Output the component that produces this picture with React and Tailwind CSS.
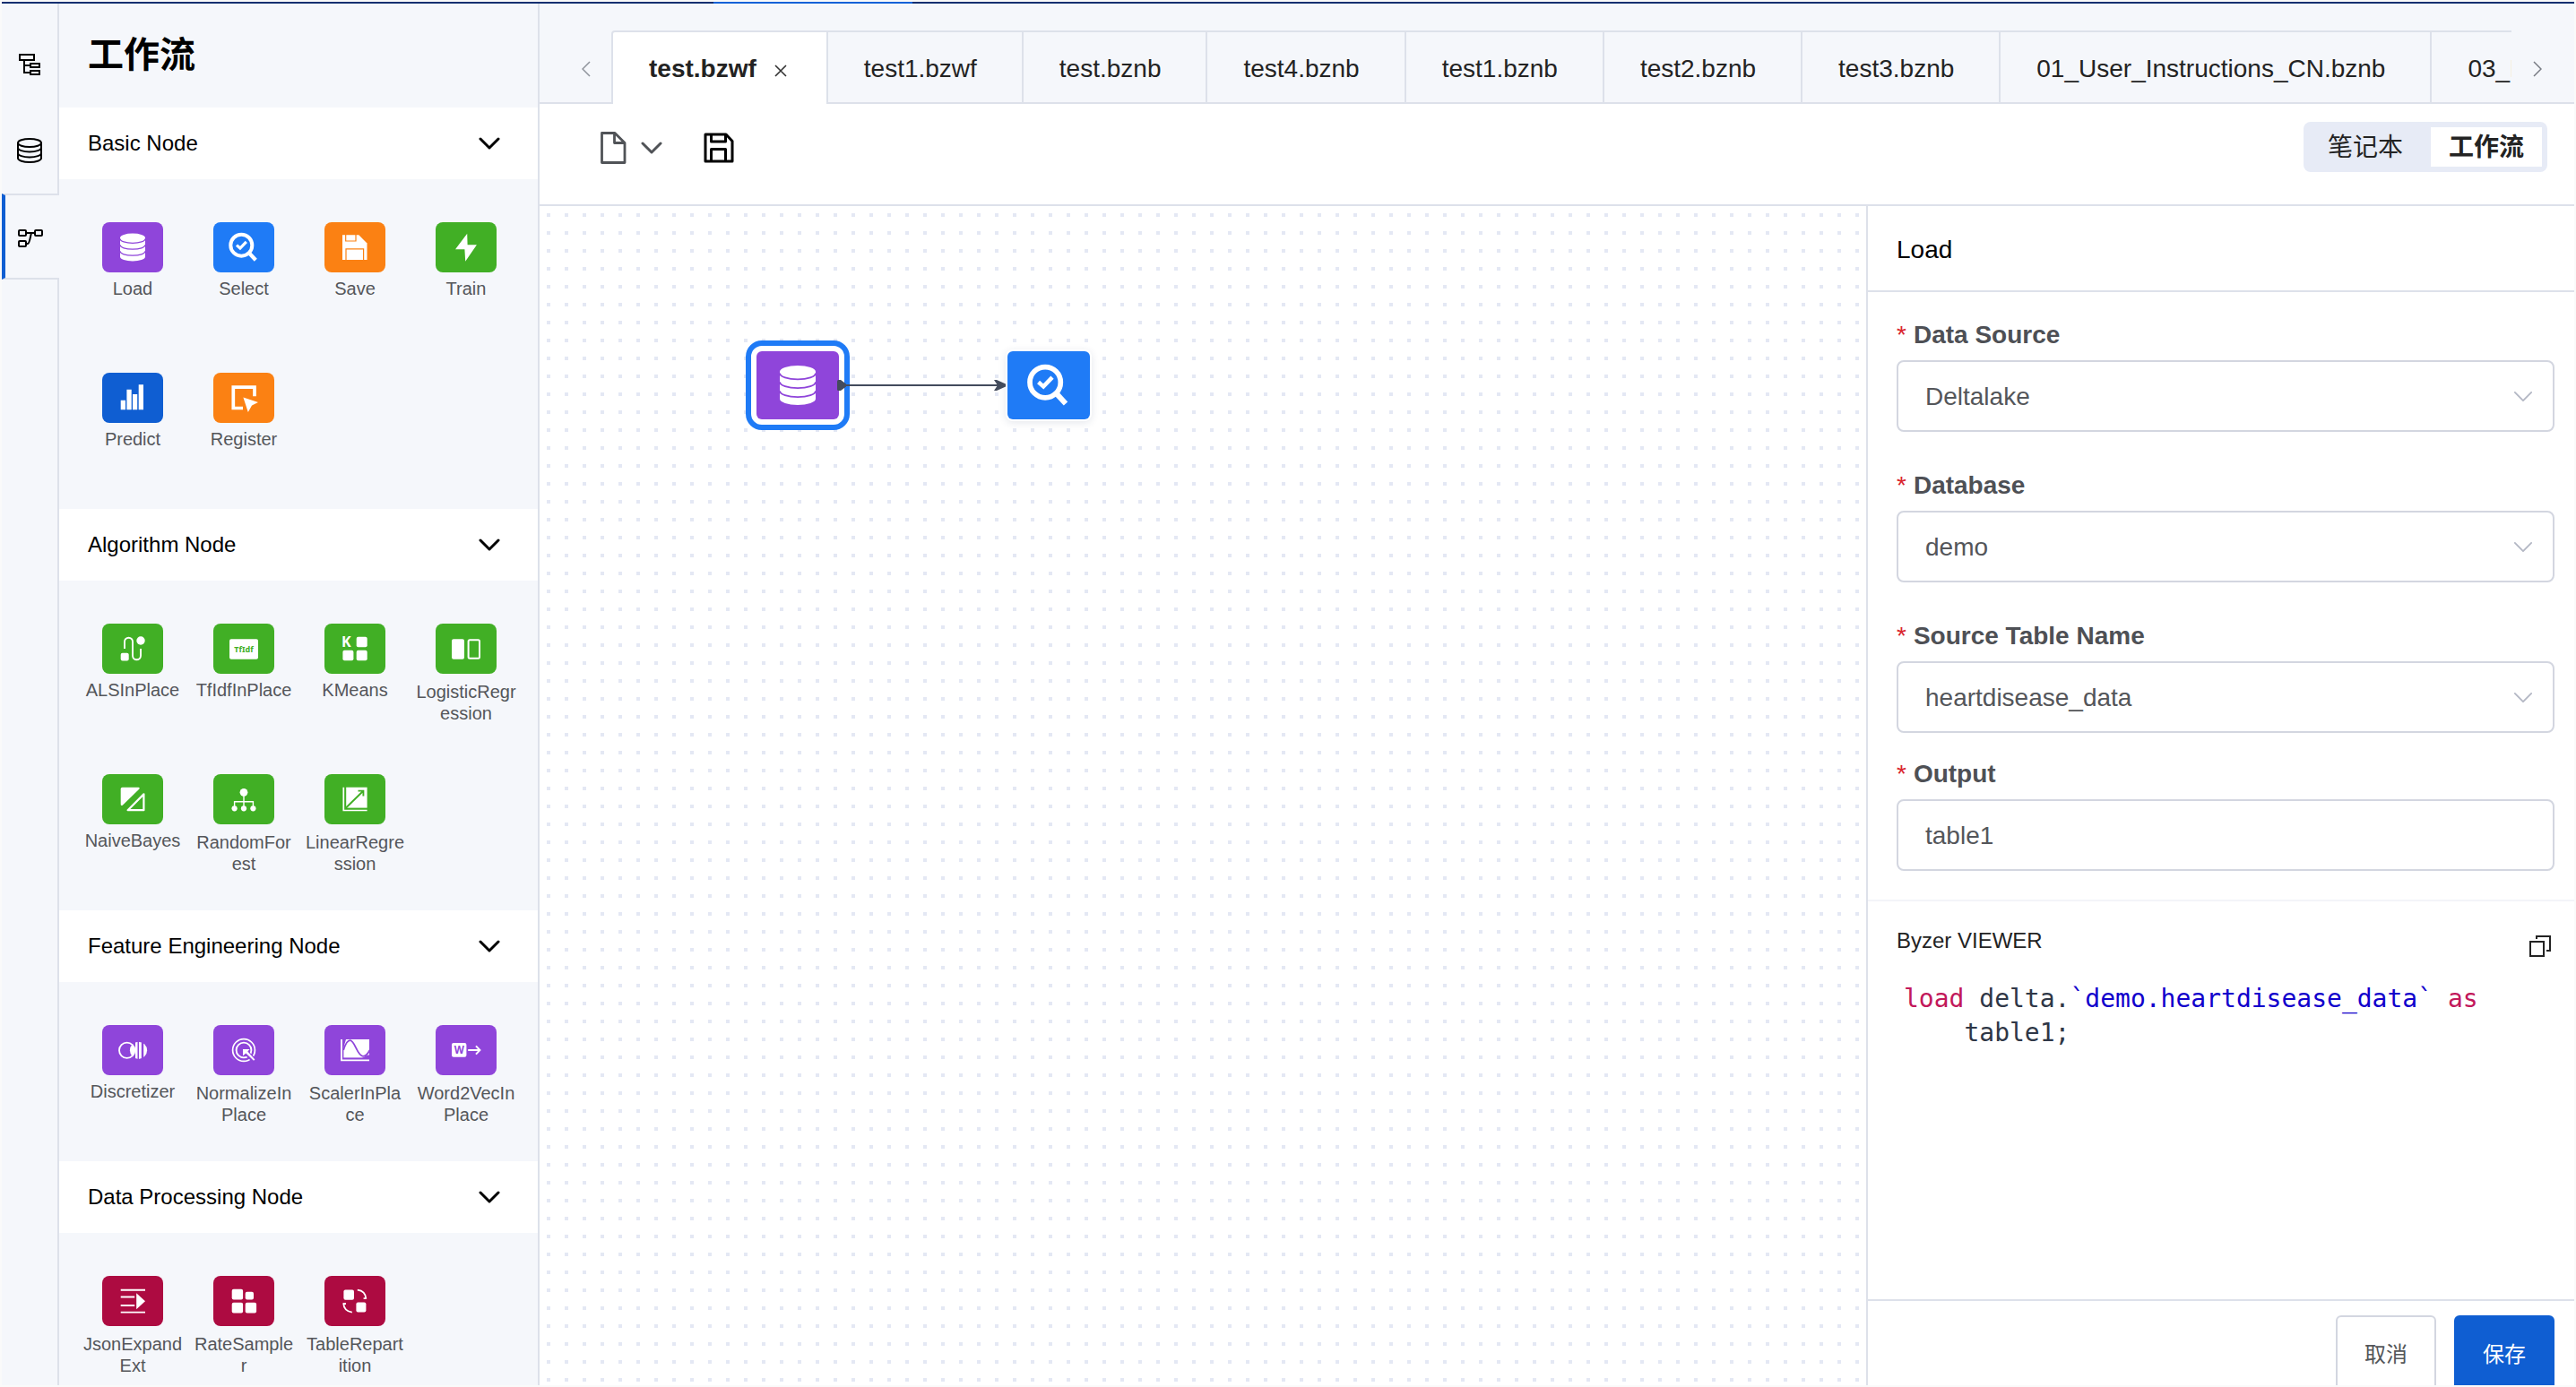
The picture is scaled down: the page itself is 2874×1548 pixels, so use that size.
import React from 'react';

const PURPLE = '#8f45da';
const BLUE = '#1f7bf6';
const ORANGE = '#fb8113';
const GREEN = '#41af25';
const NAVY = '#0f5ed2';
const CRIMSON = '#ad0b41';

/* Node glyphs share a 68x56 drawing area, the size of a palette tile. */
const glyphs = {
  load: (bg) => (
    <>
      <path d="M20 17.5A14 4.9 0 0 1 48 17.5V38.5A14 4.9 0 0 1 20 38.5Z" fill="#fff" />
      <g fill="none" stroke={bg} strokeWidth="1.3">
        <path d="M20 18.5A14 4.9 0 0 0 48 18.5" />
        <path d="M20 25.3A14 4.9 0 0 0 48 25.3" />
        <path d="M20 32.3A14 4.9 0 0 0 48 32.3" />
      </g>
    </>
  ),
  select: () => (
    <g fill="none" stroke="#fff">
      <circle cx="31.3" cy="25.7" r="12" strokeWidth="4" />
      <path d="M39.8 34.2L47.3 42.3" strokeWidth="4.2" />
      <path d="M26 25.6L29.9 29L36.8 21.8" strokeWidth="3.2" />
    </g>
  ),
  save: (bg) => (
    <>
      <path d="M20 14.3H38.3L47.5 23.5V42H20Z" fill="#fff" />
      <path d="M23.7 14V21H35V14M24 42V29.8H43.6V42" fill="none" stroke={bg} strokeWidth="1.2" />
    </>
  ),
  train: () => <path d="M35.2 12.7L22 30.3H32.4L33.2 43.7L45.9 25.3H35.6Z" fill="#fff" />,
  predict: () => (
    <path d="M20.7 30.7H26V41.3H20.7ZM27.4 18.7H32.7V41.3H27.4ZM34 24H39.2V41.3H34ZM40.7 13.3H46V41.3H40.7Z" fill="#fff" />
  ),
  register: () => (
    <>
      <path d="M46 26.3V16.2H22.3V39.5H33" fill="none" stroke="#fff" strokeWidth="3.7" />
      <path d="M33.4 27.5L50 33L43 36.6L38.8 44Z" fill="#fff" />
    </>
  ),
  als: () => (
    <>
      <path d="M25 28V20.2A4.5 4.5 0 0 1 34 20.2V35.8A4.5 4.5 0 0 0 43 35.8V28" fill="none" stroke="#fff" strokeWidth="1.9" />
      <circle cx="43" cy="19" r="4.7" fill="#fff" />
      <rect x="20.7" y="32.7" width="9" height="8.8" rx="2" fill="#fff" />
    </>
  ),
  tfidf: (bg) => (
    <>
      <rect x="18" y="17.3" width="32" height="22.4" rx="2" fill="#fff" />
      <text x="34" y="31.5" textAnchor="middle" fontFamily="Noto Sans, sans-serif" fontWeight="700" fontSize="9" fill={bg}>TfIdf</text>
    </>
  ),
  kmeans: () => (
    <g fill="#fff">
      <text x="19" y="26.3" fontFamily="Noto Sans, sans-serif" fontWeight="700" fontSize="16">K</text>
      <rect x="35.7" y="14.7" width="12" height="11.6" rx="2" />
      <rect x="20.4" y="29.7" width="12" height="11.6" rx="2" />
      <rect x="35.7" y="29.7" width="12" height="11.6" rx="2" />
    </g>
  ),
  logistic: () => (
    <>
      <rect x="18" y="17.3" width="14" height="22.4" rx="2" fill="#fff" />
      <rect x="36.6" y="18.3" width="12.4" height="20.4" rx="1.5" fill="none" stroke="#fff" strokeWidth="2" />
    </>
  ),
  bayes: () => (
    <>
      <path d="M22.5 14.7H40.5Q42.5 15 41.2 16.8L23 34.6Q20.7 36 20.7 33.6V16.5Q20.7 14.7 22.5 14.7Z" fill="#fff" />
      <path d="M46.4 22.4V40.2H28.6Z" fill="none" stroke="#fff" strokeWidth="2.2" strokeLinejoin="round" />
    </>
  ),
  forest: () => (
    <>
      <path d="M34 20V38M23.6 38V30.7H44.4V38" fill="none" stroke="#fff" strokeWidth="1.4" />
      <g fill="#fff">
        <circle cx="34" cy="20.3" r="4.4" />
        <circle cx="23.6" cy="38.3" r="3.1" />
        <circle cx="34" cy="38.3" r="3.1" />
        <circle cx="44.4" cy="38.3" r="3.1" />
      </g>
    </>
  ),
  linear: (bg) => (
    <>
      <path d="M21.3 14.7V40.5H47.6" fill="none" stroke="#fff" strokeWidth="1.7" />
      <path d="M24.2 14.7H47.6V37.6H24.2Z" fill="#fff" />
      <path d="M23.8 37.8L43 19M37.5 18.6H43.4V24.5" fill="none" stroke={bg} strokeWidth="1.9" />
    </>
  ),
  discretizer: () => (
    <>
      <clipPath id="disc-right"><circle cx="40.5" cy="28.3" r="9.6" /></clipPath>
      <clipPath id="disc-left"><circle cx="27.6" cy="28.3" r="9.4" /></clipPath>
      <circle cx="27.6" cy="28.3" r="8.6" fill="none" stroke="#fff" strokeWidth="1.8" />
      <g clipPath="url(#disc-left)"><circle cx="40.5" cy="28.3" r="9.6" fill="#fff" /></g>
      <path d="M37 18H39.5V39H37ZM41 18H43.8V39H41ZM46.2 18H51V39H46.2Z" fill="#fff" clipPath="url(#disc-right)" />
    </>
  ),
  normalize: (bg) => (
    <>
      <circle cx="34" cy="28" r="12.4" fill="none" stroke="#fff" strokeWidth="1.7" />
      <circle cx="34" cy="28" r="8.4" fill="none" stroke="#fff" strokeWidth="1.9" />
      <path d="M36 30L47 41" stroke={bg} strokeWidth="5.5" />
      <path d="M33 27H40.5L38.3 29.6L46.4 38.4L45 39.8L36.4 31.6L33 34.2Z" fill="#fff" />
    </>
  ),
  scaler: (bg) => (
    <>
      <path d="M19 16V39.3H50" fill="none" stroke="#fff" strokeWidth="1.8" />
      <path d="M21.4 16H50V36.4H21.4Z" fill="#fff" />
      <path d="M20.8 16H24L21 26Z" fill={bg} />
      <path d="M21.2 28C24 19 26 17.2 28.6 17.2C34 17.2 36.5 34.8 43 34.8C46 34.8 48.5 32 50.5 28" fill="none" stroke={bg} strokeWidth="1.8" />
      <path d="M42 37H51V33L47 34Z" fill={bg} />
    </>
  ),
  word2vec: (bg) => (
    <>
      <rect x="18" y="20" width="16.4" height="15.8" rx="2" fill="#fff" />
      <text x="26.2" y="32" textAnchor="middle" fontFamily="Noto Sans, sans-serif" fontWeight="700" fontSize="11.5" fill={bg}>W</text>
      <path d="M36.2 28H49M45 23.4L49.4 28L45 32.6" fill="none" stroke="#fff" strokeWidth="2" />
    </>
  ),
  json: () => (
    <>
      <path d="M20.7 15.7H48M20.7 23.5H36.2M20.7 33H36.2M20.7 40.6H48" stroke="#fff" strokeWidth="1.9" />
      <path d="M38.2 19.3L48 28.2L38.2 37.2Z" fill="#fff" />
    </>
  ),
  rate: () => (
    <g fill="#fff">
      <rect x="20.7" y="14.7" width="12.4" height="11.8" rx="2" />
      <rect x="35.7" y="17.7" width="9.3" height="8.8" rx="2" />
      <rect x="20.7" y="29.7" width="12.4" height="11.8" rx="2" />
      <rect x="35.7" y="29.7" width="12.4" height="11.8" rx="2" />
    </g>
  ),
  repartition: () => (
    <>
      <rect x="21.4" y="15.5" width="11.6" height="11.2" rx="2" fill="#fff" />
      <rect x="35.4" y="29.6" width="11" height="11" rx="2" fill="#fff" />
      <path d="M36.8 15.6C42.5 16.3 46 20 46.4 25.6M43.6 25.2H46.8M30.8 40.6C25 39.9 21.6 36.4 21.2 30.8M20.6 31H24" fill="none" stroke="#fff" strokeWidth="1.8" />
    </>
  ),
};

const sections = [
  {
    title: 'Basic Node',
    nodes: [
      ['Load', 'load', PURPLE],
      ['Select', 'select', BLUE],
      ['Save', 'save', ORANGE],
      ['Train', 'train', GREEN],
      ['Predict', 'predict', NAVY],
      ['Register', 'register', ORANGE],
    ],
  },
  {
    title: 'Algorithm Node',
    nodes: [
      ['ALSInPlace', 'als', GREEN],
      ['TfIdfInPlace', 'tfidf', GREEN],
      ['KMeans', 'kmeans', GREEN],
      ['LogisticRegression', 'logistic', GREEN],
      ['NaiveBayes', 'bayes', GREEN],
      ['RandomForest', 'forest', GREEN],
      ['LinearRegression', 'linear', GREEN],
    ],
  },
  {
    title: 'Feature Engineering Node',
    nodes: [
      ['Discretizer', 'discretizer', PURPLE],
      ['NormalizeInPlace', 'normalize', PURPLE],
      ['ScalerInPlace', 'scaler', PURPLE],
      ['Word2VecInPlace', 'word2vec', PURPLE],
    ],
  },
  {
    title: 'Data Processing Node',
    nodes: [
      ['JsonExpandExt', 'json', CRIMSON],
      ['RateSampler', 'rate', CRIMSON],
      ['TableRepartition', 'repartition', CRIMSON],
    ],
  },
];

const tabs = ['test1.bzwf', 'test.bznb', 'test4.bznb', 'test1.bznb', 'test2.bznb', 'test3.bznb', '01_User_Instructions_CN.bznb', '03_Data_Analysis.bznb'];

function PaletteNode({ label, glyph, color }) {
  const twoLines = label.length > 12 || label === 'RandomForest' || label === 'RateSampler';
  return (
    <button type="button" className="flex h-[168px] w-28 flex-col items-center pt-8">
      <span className="block h-14 w-[68px] rounded-lg" style={{ backgroundColor: color }}>
        <svg viewBox="0 0 68 56" className="h-14 w-[68px]" aria-hidden="true">{glyphs[glyph](color)}</svg>
      </span>
      <span className={`mt-2 w-full break-all text-center text-[20px] text-[#54565a] ${twoLines ? 'leading-6' : 'leading-5'}`}>{label}</span>
    </button>
  );
}

function Chevron({ className }) {
  return (
    <svg viewBox="0 0 24 14" className={className} fill="none" stroke="currentColor" aria-hidden="true">
      <path d="M2 2L12 12L22 2" strokeLinecap="round" strokeLinejoin="round" />
    </svg>
  );
}

function Section({ title, nodes }) {
  return (
    <section>
      <button type="button" className="flex h-20 w-full items-center justify-between bg-white pl-8 pr-[42px] text-left text-[24px] text-black">
        {title}
        <Chevron className="h-[14px] w-6 stroke-3" />
      </button>
      <div className="flex flex-wrap gap-x-3 py-4 pl-[26px] pr-5">
        {nodes.map(([label, glyph, color]) => (
          <PaletteNode key={label} label={label} glyph={glyph} color={color} />
        ))}
      </div>
    </section>
  );
}

function Rail() {
  return (
    <nav className="flex w-16 shrink-0 flex-col">
      <div className="h-5 border-r-2 border-[#dde1ea]" />
      <button type="button" aria-label="Files" className="flex h-24 items-center border-r-2 border-[#dde1ea] pl-[19px]">
        <svg viewBox="0 0 24 24" className="size-6" fill="none" stroke="#000" strokeWidth="2">
          <path d="M1 1H17V7H1ZM13 11H23V15H13ZM13 19H23V23H13ZM6 7V21H13M6 13H13" />
        </svg>
      </button>
      <button type="button" aria-label="Data" className="flex h-24 items-center border-r-2 border-[#dde1ea] pl-[17px]">
        <svg viewBox="0 0 28 28" className="size-7" fill="none" stroke="#000" strokeWidth="2">
          <ellipse cx="14" cy="5.5" rx="13" ry="4.5" />
          <path d="M1 5.5V22.5C1 25 6.8 27 14 27S27 25 27 22.5V5.5M1 11C1 13.6 6.8 15.4 14 15.4S27 13.6 27 11M1 17C1 19.6 6.8 21.4 14 21.4S27 19.6 27 17" />
        </svg>
      </button>
      <button type="button" aria-label="Workflow" className="flex h-24 items-center border-y-2 border-l-4 border-y-[#dde1ea] border-l-[#0f5ed2] pl-[14px] pt-1">
        <svg viewBox="0 0 28 20" className="h-5 w-7" fill="none" stroke="#000" strokeWidth="2">
          <rect x="1" y="1" width="8" height="6" rx="1" />
          <rect x="19" y="1" width="8" height="6" rx="1" />
          <rect x="1" y="13" width="8" height="6" rx="1" />
          <path d="M9 4H19M15 4C14 7 13 16 11 16H9" />
        </svg>
      </button>
      <div className="flex-1 border-r-2 border-[#dde1ea]" />
    </nav>
  );
}

function TabBar() {
  return (
    <div className="flex h-28 shrink-0 bg-[#f5f7fb]">
      <button type="button" aria-label="Previous tabs" className="flex w-20 shrink-0 items-center justify-center border-b-2 border-[#dde1ea] pl-6 pt-[36px]">
        <svg viewBox="0 0 10 18" className="h-[18px] w-[10px]" fill="none" stroke="#8f939b" strokeWidth="1.5"><path d="M9 1L1 9L9 17" /></svg>
      </button>
      <div className="flex min-w-0 flex-1 overflow-hidden pt-[30px]">
        <div className="flex shrink-0 items-center gap-5 rounded-tl border-x-2 border-t-2 border-[#dde1ea] bg-white pl-10 pr-[44px] pt-[2px] text-[28px] font-bold text-[#232323]">
          <button type="button" className="font-bold">test.bzwf</button>
          <button type="button" aria-label="Close tab" className="pt-1">
            <svg viewBox="0 0 14 14" className="size-[14px]" fill="none" stroke="#333" strokeWidth="1.6"><path d="M1 1L13 13M13 1L1 13" /></svg>
          </button>
        </div>
        {tabs.map((name) => (
          <button key={name} type="button" className="shrink-0 border-y-2 border-r-2 border-[#dde1ea] pl-10 pr-[50px] pt-1 text-[28px] text-[#232323]">
            {name}
          </button>
        ))}
      </div>
      <button type="button" aria-label="Next tabs" className="flex w-[70px] shrink-0 items-center justify-center border-b-2 border-[#dde1ea] pr-3 pt-[36px]">
        <svg viewBox="0 0 10 18" className="h-[18px] w-[10px]" fill="none" stroke="#777b83" strokeWidth="1.5"><path d="M1 1L9 9L1 17" /></svg>
      </button>
    </div>
  );
}

function Toolbar() {
  return (
    <div className="flex h-[114px] shrink-0 items-start justify-between border-b-2 border-[#dde1ea] pl-[67px] pr-[30px] pt-5">
      <div className="flex h-14 items-center pt-[2px]">
        <button type="button" aria-label="New file" className="flex items-center gap-4 text-[#505357]">
          <svg viewBox="0 0 30 36" className="h-9 w-[30px]" fill="none" stroke="currentColor" strokeWidth="2.8" strokeLinejoin="round">
            <path d="M2.5 1.5H17L28 12.5V34.5H2.5ZM16.5 2V12.5H27.5" />
          </svg>
          <Chevron className="h-[14px] w-6 stroke-3" />
        </button>
        <button type="button" aria-label="Save file" className="ml-[46px]">
          <svg viewBox="0 0 34 34" className="size-[34px]" fill="none" stroke="#000" strokeWidth="3" strokeLinejoin="round">
            <path d="M2 2H25L32 9.5V32H2ZM8.5 2V10H24.5V2M8.5 32V18.5H24.5V32" />
          </svg>
        </button>
      </div>
      <div className="flex h-14 items-center rounded-lg bg-[#e7ebf6] p-[6px] text-[28px] text-[#232323]">
        <button type="button" className="h-11 w-[136px] pr-[10px] pt-[2px]">笔记本</button>
        <button type="button" className="h-11 w-[124px] bg-white pt-[2px] font-bold">工作流</button>
      </div>
    </div>
  );
}

function Canvas() {
  return (
    <div className="relative min-w-0 flex-1 bg-[conic-gradient(at_4px_4px,transparent_75%,#e4e8f4_0)] bg-[length:20px_20px] bg-[position:8px_8px]">
      <button type="button" aria-label="Load node" className="absolute left-[230px] top-[150px] rounded-[18px] border-6 border-[#1f7bf6] bg-white p-[6px]">
        <span className="flex h-[76px] w-[92px] items-center justify-center rounded-md bg-[#8f45da]">
          <svg viewBox="0 0 68 56" className="h-20 w-[98px] shrink-0">{glyphs.load(PURPLE)}</svg>
        </span>
      </button>
      <button type="button" aria-label="Select node" className="absolute left-[520px] top-[160px] rounded-lg border-2 border-white bg-white shadow-[0_2px_8px_rgba(40,60,100,0.12)]">
        <span className="flex h-[76px] w-[92px] items-center justify-center rounded-md bg-[#1f7bf6]">
          <svg viewBox="0 0 68 56" className="h-20 w-[98px] shrink-0">{glyphs.select()}</svg>
        </span>
      </button>
      <svg viewBox="0 0 192 20" className="absolute left-[332px] top-[190px] h-5 w-48" aria-hidden="true">
        <path d="M0 5.5Q0 4 1.5 4H4L10 8.5V11.5L4 16H1.5Q0 16 0 14.5Z" fill="#434b5c" />
        <path d="M8 10H180" stroke="#434b5c" strokeWidth="2" />
        <path d="M175 4H178L188 8.6V11.4L178 16H175L179 10Z" fill="#434b5c" />
      </svg>
    </div>
  );
}

const fieldBox = 'h-20 w-full rounded-lg border-2 border-[#d3d6e0] bg-white px-[30px] pt-[2px] text-[28px] text-[#54565a]';

function Label({ id, children }) {
  return (
    <label htmlFor={id} className="mb-2 flex gap-2 pt-[2px] text-[28px] font-bold leading-10 text-[#4e5055]">
      <span className="font-normal text-[#d9252e]">*</span>
      {children}
    </label>
  );
}

function SelectField({ id, label, value }) {
  return (
    <div>
      <Label id={id}>{label}</Label>
      <div className="relative">
        <select id={id} defaultValue={value} className={`${fieldBox} appearance-none`}>
          <option>{value}</option>
        </select>
        <Chevron className="pointer-events-none absolute right-6 top-[34px] h-[13px] w-[22px] stroke-2 text-[#b3b7c4]" />
      </div>
    </div>
  );
}

function Inspector() {
  return (
    <aside className="flex w-[790px] shrink-0 flex-col border-l-2 border-[#dde1ea]">
      <h2 className="flex h-24 shrink-0 items-center border-b-2 border-[#dde1ea] pl-8 pt-1 text-[28px] text-black">Load</h2>
      <form className="border-b-2 border-[#f3f4f9] pb-8 pl-8 pr-[22px] pt-[26px]">
        <div className="flex flex-col gap-[38px]">
          <SelectField id="source" label="Data Source" value="Deltalake" />
          <SelectField id="database" label="Database" value="demo" />
          <SelectField id="table" label="Source Table Name" value="heartdisease_data" />
        </div>
        <div className="mt-6">
          <Label id="output">Output</Label>
          <input id="output" type="text" defaultValue="table1" className={fieldBox} />
        </div>
      </form>
      <div className="min-h-0 flex-1 pl-8 pr-[26px] pt-6">
        <div className="flex justify-between">
          <h3 className="text-[24px] leading-10 text-[#232323]">Byzer VIEWER</h3>
          <button type="button" aria-label="Copy code" className="mt-[14px] self-start">
            <svg viewBox="0 0 24 24" className="size-6" fill="none" stroke="#232323" strokeWidth="2">
              <path d="M1 7H16V23H1ZM8 4V1H23V17H19" />
            </svg>
          </button>
        </div>
        <pre className="mt-[26px] whitespace-pre-wrap pl-2 text-[28px] leading-[38px] text-[#2f3747] font-['DejaVu_Sans_Mono',monospace]">
          <span className="text-[#c2185b]">load</span>
          {' delta.'}
          <span className="text-[#1100cc]">`demo.heartdisease_data`</span>{' '}
          <span className="text-[#c2185b]">as</span>
          {'\n    table1;'}
        </pre>
      </div>
      <div className="flex h-24 shrink-0 items-start justify-end gap-5 overflow-hidden border-t-2 border-[#dde1ea] pr-[22px] pt-4 text-[24px]">
        <button type="button" className="h-[88px] w-28 rounded-md border-2 border-[#d3d6e0] text-[#54565a]">取消</button>
        <button type="button" className="h-[88px] w-28 rounded-md bg-[#0f5ed2] text-white">保存</button>
      </div>
    </aside>
  );
}

export default function App() {
  return (
    <div className="flex h-screen flex-col overflow-hidden border-2 border-[#fafafa] bg-white font-['Liberation_Sans','Noto_Sans_CJK_SC',sans-serif]">
      <div className="h-[2px] shrink-0 bg-[#0d2f70]">
        <div className="ml-[794px] h-full w-[222px] bg-[#0f62d8]" />
      </div>
      <div className="flex min-h-0 flex-1">
        <div className="flex shrink-0 bg-[#f5f7fb]">
          <Rail />
          <div className="w-[536px] overflow-hidden border-r-2 border-[#dde1ea]">
            <h1 className="flex h-[116px] items-center pb-[3px] pl-8 text-[40px] font-bold text-black">工作流</h1>
            {sections.map((s) => (
              <Section key={s.title} title={s.title} nodes={s.nodes} />
            ))}
          </div>
        </div>
        <main className="flex min-w-0 flex-1 flex-col">
          <TabBar />
          <Toolbar />
          <div className="flex min-h-0 flex-1">
            <Canvas />
            <Inspector />
          </div>
        </main>
      </div>
    </div>
  );
}
